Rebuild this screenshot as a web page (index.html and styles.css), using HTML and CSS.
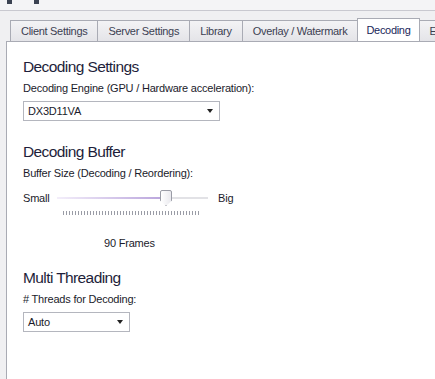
FILE: index.html
```html
<!DOCTYPE html>
<html lang="en">
<head>
  <meta charset="UTF-8" />
  <title>Decoding Settings</title>
  <link rel="stylesheet" href="styles.css">
</head>
<body>
  <div class="titlebar">
    <span class="grip"></span>
    <span class="grip"></span>
  </div>

  <div class="tabs">
    <div class="tab">Client Settings</div>
    <div class="tab">Server Settings</div>
    <div class="tab">Library</div>
    <div class="tab">Overlay / Watermark</div>
    <div class="tab active">Decoding</div>
    <div class="tab">Extras</div>
  </div>

  <div class="panel">
    <h2>Decoding Settings</h2>
    <div class="label">Decoding Engine (GPU / Hardware acceleration):</div>
    <div class="select wide">
      <span>DX3D11VA</span>
      <span class="arrow"></span>
    </div>

    <h2>Decoding Buffer</h2>
    <div class="label">Buffer Size (Decoding / Reordering):</div>
    <div class="slider-row">
      <span class="end">Small</span>
      <div class="slider">
        <div class="track">
          <div class="fill"></div>
        </div>
        <div class="thumb"></div>
        <div class="ticks"></div>
      </div>
      <span class="end big">Big</span>
    </div>
    <div class="value">90 Frames</div>

    <h2>Multi Threading</h2>
    <div class="label"># Threads for Decoding:</div>
    <div class="select narrow">
      <span>Auto</span>
      <span class="arrow"></span>
    </div>
  </div>
</body>
</html>
```

FILE: styles.css
```css
* {
  box-sizing: border-box;
}
html, body {
  height: 100%;
}
body {
  margin: 0;
  background: #f0f0f2;
  font-family: 'Liberation Sans', Arial, sans-serif;
  font-size: 11px;
  letter-spacing: -0.2px;
  color: #1b1b2b;
  overflow: hidden;
  display: flex;
  flex-direction: column;
}
.titlebar {
  height: 11px;
  border-bottom: 1px solid #c9c9d0;
  background: #f4f4f6;
  display: flex;
  padding-left: 7px;
  gap: 22px;
}
.grip {
  width: 5px;
  height: 4px;
  background: #3b4252;
}
.tabs {
  display: flex;
  align-items: flex-end;
  padding-left: 10px;
  margin-top: 7px;
  height: 23px;
  white-space: nowrap;
  overflow: hidden;
}
.tab {
  height: 21px;
  padding: 4px 10px 0;
  border: 1px solid #a9abb4;
  border-bottom: none;
  margin-right: -1px;
  background: linear-gradient(#f3f3f5, #e4e4e8);
  color: #3c3f52;
  letter-spacing: -0.3px;
}
.tab.active {
  height: 24px;
  background: #fff;
  color: #1a1f5a;
  padding: 5px 8px 0;
  position: relative;
  z-index: 1;
  margin-bottom: -1px;
}
.panel {
  flex: 1;
  margin-left: 6px;
  background: #fff;
  border-left: 1px solid #a9abb4;
  border-top: 1px solid #a9abb4;
  padding: 16px 16px 0;
}
h2 {
  margin: 0 0 6px;
  font-weight: normal;
  font-size: 15.5px;
  letter-spacing: -0.6px;
  color: #1e1e3a;
}
.label {
  margin-bottom: 7px;
}
.select {
  height: 20px;
  border: 1px solid #b4b6be;
  display: flex;
  align-items: center;
  justify-content: space-between;
  padding: 0 6px 0 4px;
  margin-bottom: 22px;
}
.select.wide {
  width: 197px;
}
.select.narrow {
  width: 107px;
}
.arrow {
  width: 0;
  height: 0;
  border-left: 3.5px solid transparent;
  border-right: 3.5px solid transparent;
  border-top: 4px solid #222;
}
.slider-row {
  display: grid;
  grid-template-columns: 34px 151px auto;
  margin-top: 11px;
  height: 30px;
}
.end {
  line-height: 16px;
}
.end.big {
  padding-left: 10px;
}
.slider {
  position: relative;
  height: 30px;
}
.track {
  margin-top: 7px;
  height: 2px;
  background: #e2e2e6;
}
.fill {
  width: 108px;
  height: 2px;
  background: linear-gradient(90deg, #f3eefa, #b9a4dc);
}
.thumb {
  position: absolute;
  left: 103px;
  top: 0;
  width: 12px;
  height: 16px;
  border: 1px solid #9a9ca6;
  border-radius: 2px 2px 0 0;
  background: linear-gradient(90deg, #ffffff, #e9e9ee);
  clip-path: polygon(0 0, 100% 0, 100% 65%, 50% 100%, 0 65%);
}
.ticks {
  position: absolute;
  left: 6px;
  top: 21px;
  width: 138px;
  height: 4px;
  background: repeating-linear-gradient(90deg, #9a9ca6 0 1px, transparent 1px 3px);
}
.value {
  margin: 17px 0 20px 81px;
}
```
